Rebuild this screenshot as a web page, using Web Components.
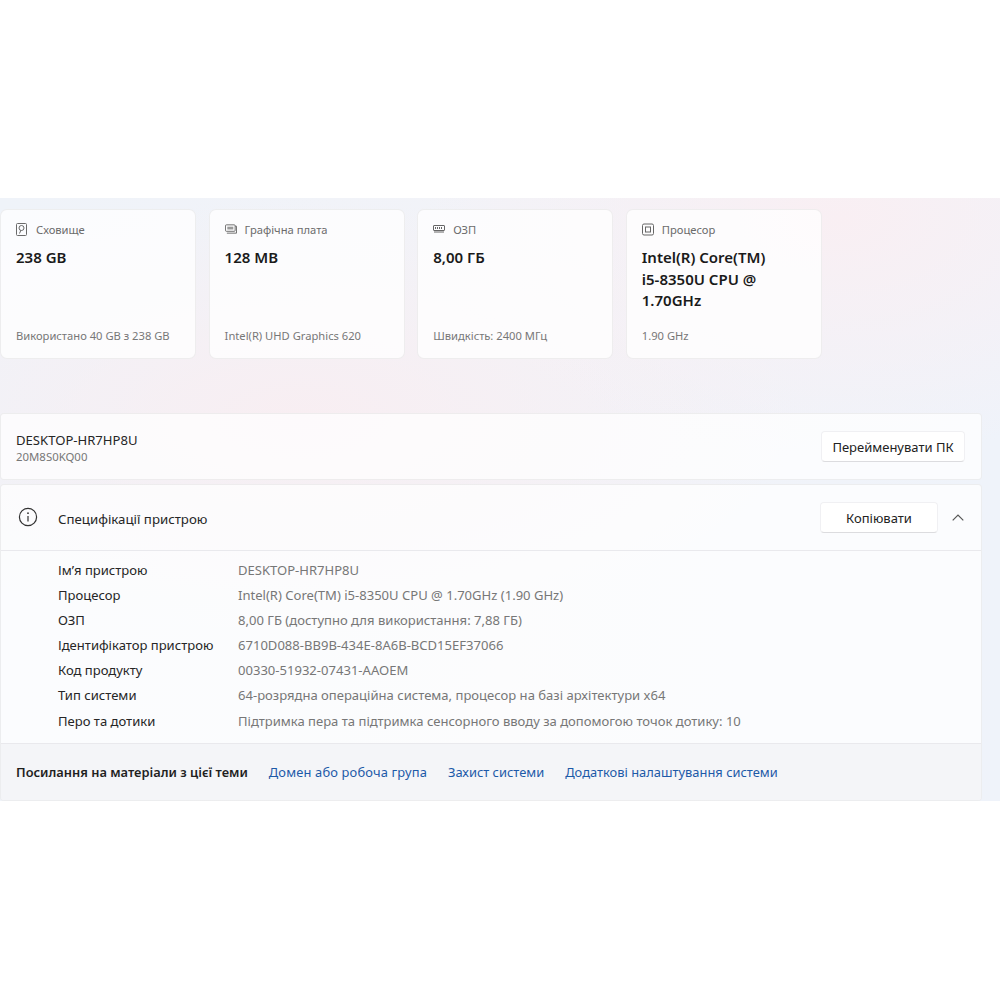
<!DOCTYPE html>
<html lang="uk">
<head>
<meta charset="utf-8">
<title>Система</title>
<style>
	html, body { margin: 0; background: #fff; }
	body { font-family: "Noto Sans", "Open Sans", sans-serif; padding-top: 198px; }
</style>
</head>
<body>
<about-page>
	<stat-card label="Сховище" value="238 GB" note="Використано 40 GB з 238 GB">
		<svg slot="icon" width="11" height="13" viewBox="0 0 11 13" fill="none" stroke="#6a6a6a"><rect x=".5" y=".5" width="10" height="12" rx="1"/><circle cx="5.5" cy="5" r="2.5"/><path d="M5 7 3.5 10.5"/></svg>
	</stat-card>
	<stat-card label="Графічна плата" value="128 MB" note="Intel(R) UHD Graphics 620">
		<svg slot="icon" width="13" height="10" viewBox="0 0 13 10" fill="none" stroke="#666"><rect x=".5" y=".5" width="10.5" height="7" rx="1"/><rect x="2.5" y="2.5" width="6.5" height="3" fill="#999" stroke="none"/><path d="M11 2h1.5v7.5H2"/></svg>
	</stat-card>
	<stat-card label="ОЗП" value="8,00 ГБ" note="Швидкість: 2400 МГц">
		<svg slot="icon" width="12" height="8" viewBox="0 0 12 8" fill="none" stroke="#666"><rect x=".5" y=".5" width="11" height="5" rx=".5"/><path d="M2.5 2v2M4.5 2v2M6.5 2v2M8.5 2v2M1 7h10"/></svg>
	</stat-card>
	<stat-card label="Процесор" value="Intel(R) Core(TM) i5-8350U CPU @ 1.70GHz" note="1.90 GHz">
		<svg slot="icon" width="12" height="13" viewBox="0 0 12 13" fill="none" stroke="#666"><rect x=".5" y="1" width="11" height="11" rx="1.5"/><rect x="3.5" y="4" width="5" height="5"/></svg>
	</stat-card>
	<device-bar slot="bar" name="DESKTOP-HR7HP8U" model="20M8S0KQ00" action="Перейменувати ПК"></device-bar>
	<spec-panel slot="spec" title-text="Специфікації пристрою">
		<spec-row name="Ім’я пристрою" value="DESKTOP-HR7HP8U"></spec-row>
		<spec-row name="Процесор" value="Intel(R) Core(TM) i5-8350U CPU @ 1.70GHz (1.90 GHz)"></spec-row>
		<spec-row name="ОЗП" value="8,00 ГБ (доступно для використання: 7,88 ГБ)"></spec-row>
		<spec-row name="Ідентифікатор пристрою" value="6710D088-BB9B-434E-8A6B-BCD15EF37066"></spec-row>
		<spec-row name="Код продукту" value="00330-51932-07431-AAOEM"></spec-row>
		<spec-row name="Тип системи" value="64-розрядна операційна система, процесор на базі архітектури x64"></spec-row>
		<spec-row name="Перо та дотики" value="Підтримка пера та підтримка сенсорного вводу за допомогою точок дотику: 10"></spec-row>
		<a slot="links" class="wide" href="#">Домен або робоча група</a>
		<a slot="links" href="#">Захист системи</a>
		<a slot="links" href="#">Додаткові налаштування системи</a>
	</spec-panel>
</about-page>

<script>
(function() {
	const FONT = `"Noto Sans", "Open Sans", sans-serif`;

	class AboutPage extends HTMLElement {
		constructor() {
			super();
			this.attachShadow({mode: "open"}).innerHTML = `
				<style>
				:host {
					display: block;
					height: 603px;
					box-sizing: border-box;
					padding: 11px 18px 0 0;
					background:
						radial-gradient(ellipse 420px 240px at 840px 20px, #f9eff3 0%, rgba(249,239,243,0) 100%),
						radial-gradient(ellipse 500px 220px at 300px 220px, #f8eef2 0%, rgba(248,238,242,0) 100%),
						linear-gradient(90deg, #eff3f9, #f2f3f8 50%, #eff3fa);
				}
				.cards { display: flex; gap: 12.6px; height: 150px; margin-bottom: 54px; }
				.stack { display: flex; flex-direction: column; gap: 4px; }
				</style>
				<div class="cards"><slot></slot></div>
				<div class="stack"><slot name="bar"></slot><slot name="spec"></slot></div>
			`;
		}
	}

	class StatCard extends HTMLElement {
		constructor() {
			super();
			this.attachShadow({mode: "open"}).innerHTML = `
				<style>
				:host {
					display: flex;
					flex-direction: column;
					box-sizing: border-box;
					width: 196px;
					height: 150px;
					padding: 11px 15px 14px;
					background: rgba(255,255,255,.76);
					border: 1px solid rgba(0,0,0,.06);
					border-radius: 7px;
					font-family: ${FONT};
				}
				.head { display: flex; align-items: center; gap: 8px; height: 16px; font-size: 11.2px; color: #6b6b6b; }
				.ico { display: flex; width: 12px; justify-content: flex-start; }
				.value { margin-top: 10px; max-width: 135px; font-size: 15px; line-height: 21.5px; font-weight: 600; color: #1a1a1a; flex: 1; }
				.note { font-size: 11.2px; line-height: 16px; color: #777; }
				</style>
				<div class="head"><span class="ico"><slot name="icon"></slot></span><span id="label"></span></div>
				<div class="value" id="value"></div>
				<div class="note" id="note"></div>
			`;
			this.shadowRoot.getElementById("label").textContent = this.getAttribute("label");
			this.shadowRoot.getElementById("value").textContent = this.getAttribute("value");
			this.shadowRoot.getElementById("note").textContent = this.getAttribute("note");
		}
	}

	class WinButton extends HTMLElement {
		constructor() {
			super();
			this.attachShadow({mode: "open"}).innerHTML = `
				<style>
				:host {
					display: inline-flex;
					align-items: center;
					justify-content: center;
					box-sizing: border-box;
					height: 31px;
					background: #fff;
					border: 1px solid #f0f0f3;
					border-bottom-color: #dcdcdf;
					border-radius: 4px;
					font-size: 13px;
					color: #222;
				}
				</style>
				<slot></slot>
			`;
		}
	}

	class DeviceBar extends HTMLElement {
		constructor() {
			super();
			this.attachShadow({mode: "open"}).innerHTML = `
				<style>
				:host {
					display: flex;
					align-items: center;
					justify-content: space-between;
					box-sizing: border-box;
					height: 67px;
					padding: 0 16px 0 15px;
					background: rgba(255,255,255,.72);
					border: 1px solid rgba(0,0,0,.06);
					border-radius: 4px;
					font-family: ${FONT};
				}
				.info { padding-top: 3px; }
				.name { font-size: 13.1px; line-height: 17px; color: #262626; }
				.model { font-size: 11.4px; line-height: 15px; color: #777; }
				win-button { width: 144px; }
				</style>
				<div class="info"><div class="name" id="name"></div><div class="model" id="model"></div></div>
				<win-button id="action"></win-button>
			`;
			this.shadowRoot.getElementById("name").textContent = this.getAttribute("name");
			this.shadowRoot.getElementById("model").textContent = this.getAttribute("model");
			this.shadowRoot.getElementById("action").textContent = this.getAttribute("action");
		}
	}

	class SpecPanel extends HTMLElement {
		constructor() {
			super();
			this.attachShadow({mode: "open"}).innerHTML = `
				<style>
				:host {
					display: block;
					box-sizing: border-box;
					height: 317px;
					background: rgba(255,255,255,.72);
					border: 1px solid rgba(0,0,0,.06);
					border-radius: 4px;
					font-family: ${FONT};
					overflow: hidden;
				}
				.head { display: flex; align-items: center; height: 66px; box-sizing: border-box; padding: 0 15px 0 17px; border-bottom: 1px solid #e9e9ed; }
				.head svg.info { margin-top: -2px; }
				.title { flex: 1; margin: 2px 0 0 20px; font-size: 13.25px; color: #262626; }
				win-button { width: 118px; }
				.chev { margin-left: 14px; display: flex; width: 14px; }
				.rows { display: flex; flex-direction: column; height: 193px; box-sizing: border-box; padding: 6px 0 0 57px; border-bottom: 1px solid #e9e9ed; }
				.foot { display: flex; align-items: center; height: 56px; padding-left: 15px; background: rgba(242,243,247,.85); font-size: 12.9px; }
				b { font-weight: 600; font-size: 12.85px; color: #1f1f1f; margin-right: 21px; }
				.links { display: flex; gap: 21px; }
				::slotted(a) { color: #1d5aa8; text-decoration: none; }
				::slotted(a.wide) { letter-spacing: .16px; }
				</style>
				<div class="head">
					<svg class="info" width="20" height="20" viewBox="0 0 20 20" fill="none" stroke="#333" stroke-width="1.2"><circle cx="10" cy="10" r="8.6"/><path d="M10 9v5.5"/><circle cx="10" cy="6.2" r=".9" fill="#333" stroke="none"/></svg>
					<span class="title" id="title"></span>
					<win-button>Копіювати</win-button>
					<span class="chev"><svg width="12" height="7" viewBox="0 0 12 7" fill="none" stroke="#555" stroke-width="1.2"><path d="M.7 6.3 6 1l5.3 5.3"/></svg></span>
				</div>
				<div class="rows"><slot></slot></div>
				<div class="foot"><b>Посилання на матеріали з цієї теми</b><div class="links"><slot name="links"></slot></div></div>
			`;
			this.shadowRoot.getElementById("title").textContent = this.getAttribute("title-text");
		}
	}

	class SpecRow extends HTMLElement {
		constructor() {
			super();
			this.attachShadow({mode: "open"}).innerHTML = `
				<style>
				:host { display: flex; height: 25.17px; align-items: center; font-size: 13.05px; }
				.k { width: 180px; flex: none; color: #262626; }
				.v { color: #777; white-space: nowrap; }
				</style>
				<span class="k" id="k"></span><span class="v" id="v"></span>
			`;
			this.shadowRoot.getElementById("k").textContent = this.getAttribute("name");
			this.shadowRoot.getElementById("v").textContent = this.getAttribute("value");
		}
	}

	customElements.define("win-button", WinButton);
	customElements.define("stat-card", StatCard);
	customElements.define("device-bar", DeviceBar);
	customElements.define("spec-row", SpecRow);
	customElements.define("spec-panel", SpecPanel);
	customElements.define("about-page", AboutPage);
})();
</script>
</body>
</html>
